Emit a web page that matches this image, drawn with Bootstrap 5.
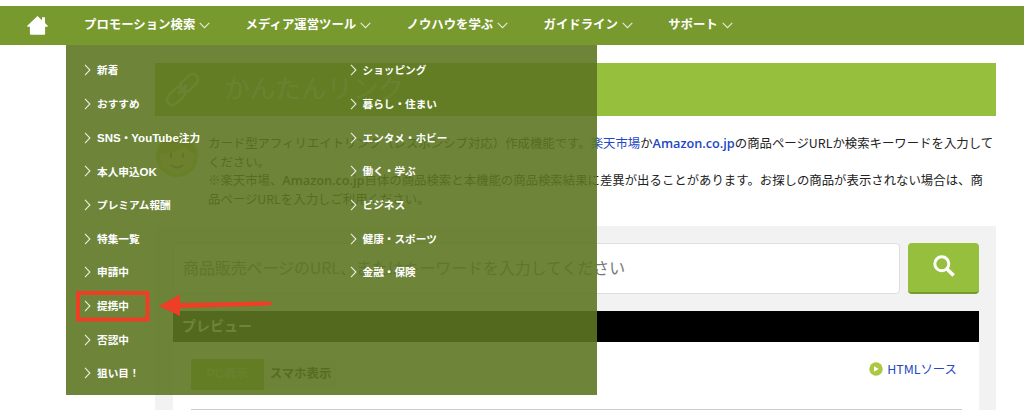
<!DOCTYPE html>
<html lang="ja">

<head>
  <meta charset="UTF-8" />
  <meta name="viewport" content="width=device-width, initial-scale=1.0" />
  <title>かんたんリンク</title>
  <link href="https://cdn.jsdelivr.net/npm/bootstrap@5.3.3/dist/css/bootstrap.min.css" rel="stylesheet">
  <style>
    body {
      height: 410px;
      overflow: hidden;
      padding-top: 6px;
      background: #fff;
      color: #222;
      font-family: "Liberation Sans", "Noto Sans CJK JP", sans-serif;
      font-size: 12.4px;
    }

    a {
      text-decoration: none;
    }

    .main-nav {
      height: 39px;
      padding: 0 0 0 27px;
      background: #77992e;
      position: relative;
      z-index: 10;
    }

    .home-link {
      width: 57px;
      line-height: 1;
    }

    .main-nav .nav-link {
      padding: 0;
      margin-right: 35.3px;
      color: #fff;
      font-weight: bold;
      font-size: 12.4px;
      white-space: nowrap;
    }

    .main-nav .nav-link svg {
      margin-left: 4px;
    }

    .mega-menu {
      top: 39px;
      left: 66px;
      width: 531px;
      height: 350px;
      padding: 9.5px 0 0 18px;
      background: rgba(92, 117, 34, .895);
    }

    .mega-menu .menu-col {
      width: 265.5px;
      flex: none;
    }

    .mega-menu .menu-col + .menu-col {
      width: 240px;
    }

    .mega-menu li {
      height: 33.67px;
      display: flex;
      align-items: center;
    }

    .mega-menu li a {
      color: #fff;
      font-weight: bold;
      font-size: 10.65px;
      white-space: nowrap;
    }

    .mega-menu li .wide {
      font-size: 11.5px;
    }

    .mega-menu li svg {
      margin: -2px 6px 0 0;
    }

    .marker {
      left: 10px;
      top: 242px;
    }

    .page {
      width: 841px;
      margin: 18px 0 0 155px;
    }

    .page-title {
      height: 53px;
      margin: 0;
      padding-left: 6px;
      background: #96bf3d;
      color: #d9eab2;
      font-size: 25.7px;
      font-weight: 400;
    }

    .page-title span {
      margin-left: 20px;
    }

    .lead-text {
      height: 110px;
      padding-top: 18px;
      line-height: 18.5px;
      white-space: nowrap;
      font-family: "Noto Sans CJK JP", sans-serif;
    }

    .lead-text p {
      margin: 0 0 0 9px;
    }

    .lead-text a,
    .source-link {
      color: #2347c5;
    }

    .lead-text .latin {
      font-family: "Open Sans", sans-serif;
      font-weight: 600;
      font-size: 12.7px;
      line-height: 1;
    }

    .tool-box {
      height: 184px;
      overflow: hidden;
      padding: 17px 17px 0 18px;
      background: #f2f2f2;
    }

    .tool-box .form-control {
      height: 51px;
      padding: 0 9px 3px;
      border: 1px solid #dfdfe3;
      border-radius: 4px;
      font-size: 15.9px;
      font-family: "Noto Sans CJK JP", sans-serif;
    }

    .tool-box .form-control::placeholder {
      color: #777;
    }

    .btn-search {
      width: 71px;
      height: 51px;
      flex: none;
      padding: 0 0 3px;
      border: 0;
      border-bottom: 2px solid #78992f;
      border-radius: 4px;
      background: #96bf3d;
    }

    .preview-head {
      height: 31px;
      margin-top: 17px;
      padding-left: 9px;
      background: #000;
      color: #fff;
      font-size: 14px;
      font-weight: bold;
    }

    .preview-body {
      height: 68px;
      padding: 17px 17px 0 18px;
      background: #fff;
    }

    .view-tabs span {
      width: 73px;
      height: 31px;
      line-height: 31px;
      text-align: center;
      font-weight: bold;
      background: #f4f4f4;
    }

    .view-tabs .current {
      background: #96bf3d;
      color: #c3dc8c;
    }

    .source-link {
      font-family: "Noto Sans CJK JP", sans-serif;
      margin: 1px 5px 0 0;
      height: 18px;
    }

    .preview-frame {
      margin-top: 19px;
      border-top: 1px solid #ccc;
    }
  </style>
</head>

<body>
  <svg class="d-none">
    <symbol id="down" viewBox="0 0 11 7">
      <path d="M.7.8 5.5 5.7 10.3.8" fill="none" stroke="#e6eed6" stroke-width="1.1" />
    </symbol>
    <symbol id="right" viewBox="0 0 7 12">
      <path d="M1 .8 5.9 6 1 11.2" fill="none" stroke="#e8eedd" stroke-width="1.1" />
    </symbol>
  </svg>

  <nav class="main-nav d-flex align-items-center">
    <a class="home-link" href="#">
      <svg width="21" height="19" viewBox="0 0 21 19">
        <path d="M10.5 0 15 4.2V1.3h3v5.6l3 3-.6.9h-2.3V18q0 .8-.8.8H3.7q-.8 0-.8-.8v-7.2H.6L0 9.9Z" fill="#fff" />
      </svg>
    </a>
    <a class="nav-link" href="#">プロモーション検索<svg width="11" height="7"><use href="#down" /></svg></a>
    <a class="nav-link" href="#">メディア運営ツール<svg width="11" height="7"><use href="#down" /></svg></a>
    <a class="nav-link" href="#">ノウハウを学ぶ<svg width="11" height="7"><use href="#down" /></svg></a>
    <a class="nav-link" href="#">ガイドライン<svg width="11" height="7"><use href="#down" /></svg></a>
    <a class="nav-link" href="#">サポート<svg width="11" height="7"><use href="#down" /></svg></a>

    <div class="mega-menu position-absolute d-flex">
      <ul class="menu-col list-unstyled mb-0">
        <li><svg width="7" height="12"><use href="#right" /></svg><a href="#">新着</a></li>
        <li><svg width="7" height="12"><use href="#right" /></svg><a href="#">おすすめ</a></li>
        <li><svg width="7" height="12"><use href="#right" /></svg><a href="#"><span class="wide">SNS</span>・<span class="wide">YouTube</span>注力</a></li>
        <li><svg width="7" height="12"><use href="#right" /></svg><a href="#">本人申込<span class="wide">OK</span></a></li>
        <li><svg width="7" height="12"><use href="#right" /></svg><a href="#">プレミアム報酬</a></li>
        <li><svg width="7" height="12"><use href="#right" /></svg><a href="#">特集一覧</a></li>
        <li><svg width="7" height="12"><use href="#right" /></svg><a href="#">申請中</a></li>
        <li><svg width="7" height="12"><use href="#right" /></svg><a href="#">提携中</a></li>
        <li><svg width="7" height="12"><use href="#right" /></svg><a href="#">否認中</a></li>
        <li><svg width="7" height="12"><use href="#right" /></svg><a href="#">狙い目！</a></li>
      </ul>
      <ul class="menu-col list-unstyled mb-0">
        <li><svg width="7" height="12"><use href="#right" /></svg><a href="#">ショッピング</a></li>
        <li><svg width="7" height="12"><use href="#right" /></svg><a href="#">暮らし・住まい</a></li>
        <li><svg width="7" height="12"><use href="#right" /></svg><a href="#">エンタメ・ホビー</a></li>
        <li><svg width="7" height="12"><use href="#right" /></svg><a href="#">働く・学ぶ</a></li>
        <li><svg width="7" height="12"><use href="#right" /></svg><a href="#">ビジネス</a></li>
        <li><svg width="7" height="12"><use href="#right" /></svg><a href="#">健康・スポーツ</a></li>
        <li><svg width="7" height="12"><use href="#right" /></svg><a href="#">金融・保険</a></li>
      </ul>
      <!-- red frame and arrow -->
      <svg class="marker position-absolute" width="200" height="36" viewBox="0 0 200 36">
        <rect x="2" y="6" width="69.500" height="26.500" fill="none" stroke="#ee3e26" stroke-width="4" />
        <path d="M83 19 104 7.500V16L194.500 14.500Q196 16.500 194.500 18.500L104 21V29Z" fill="#ee3e26" />
      </svg>
    </div>
  </nav>

  <main class="page">
    <h1 class="page-title d-flex align-items-center">
      <svg width="43" height="40" viewBox="0 0 43 40" fill="none" stroke="#e3efc8" stroke-width="2.600">
        <rect x="-10.500" y="-5.500" width="21" height="11" rx="5.500" transform="translate(28 13) rotate(-45)" />
        <rect x="-10.500" y="-5.500" width="21" height="11" rx="5.500" transform="translate(15 26) rotate(-45)" />
        <path d="m17 24 9-9" />
      </svg>
      <span>かんたんリンク</span>
    </h1>

    <div class="lead-text d-flex">
      <svg width="44" height="44" viewBox="0 0 44 44">
        <circle cx="22" cy="22" r="21" fill="#cfd463" />
        <circle cx="22" cy="23" r="17" fill="#f5d98c" />
        <path d="M3 20Q6 2 22 2t19 18q-8-2-12-8-8 8-26 8Z" fill="#d6b04c" />
        <path d="M16 19v5M28 19v5M16 31q6 5 12 0" fill="none" stroke="#907040" stroke-width="2" />
      </svg>
      <p>
        カード型アフィリエイトリンク（レスポンシブ対応）作成機能です。<a href="#">楽天市場</a>か<a href="#" class="latin">Amazon.co.jp</a>の商品ページURLか検索キーワードを入力して<br>
        ください。<br>
        ※楽天市場、<span class="latin">Amazon.co.jp</span>自体の商品検索と本機能の商品検索結果に差異が出ることがあります。お探しの商品が表示されない場合は、商<br>
        品ページURLを入力しご利用ください。
      </p>
    </div>

    <section class="tool-box">
      <div class="d-flex gap-2">
        <input type="text" class="form-control" placeholder="商品販売ページのURL、またはキーワードを入力してください">
        <button type="button" class="btn-search">
          <svg width="22" height="22" viewBox="0 0 22 22" fill="none" stroke="#fff">
            <circle cx="8.800" cy="8.800" r="7" stroke-width="3" />
            <path d="m14 14 6.600 6.600" stroke-width="3.600" />
          </svg>
        </button>
      </div>
      <div class="preview-head d-flex align-items-center">プレビュー</div>
      <div class="preview-body">
        <div class="d-flex justify-content-between">
          <div class="view-tabs d-flex">
            <span class="current">PC表示</span>
            <span>スマホ表示</span>
          </div>
          <a class="source-link d-flex align-items-center" href="#">
            <svg class="me-1" width="14" height="14" viewBox="0 0 14 14">
              <circle cx="7" cy="7" r="6.700" fill="#abc840" />
              <path d="M5 4.200 9.700 7 5 9.800Z" fill="#fff" />
            </svg>
            HTMLソース
          </a>
        </div>
        <div class="preview-frame"></div>
      </div>
    </section>
  </main>
  <script src="https://cdn.jsdelivr.net/npm/bootstrap@5.3.3/dist/js/bootstrap.bundle.min.js"></script>
</body>

</html>
